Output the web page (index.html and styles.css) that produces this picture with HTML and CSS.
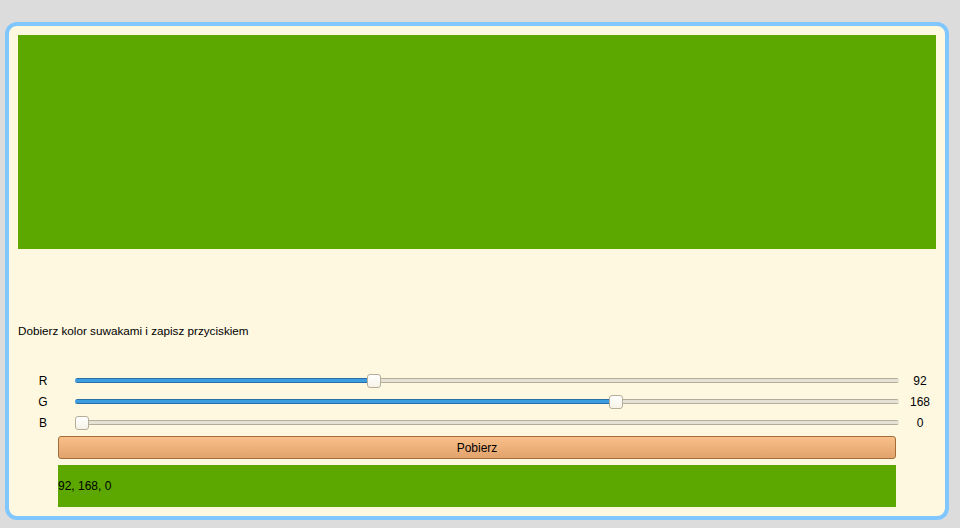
FILE: index.html
```html
<!DOCTYPE html>
<html lang="pl">
<head>
<meta charset="utf-8">
<title>Dobierz kolor</title>
<link rel="stylesheet" href="styles.css">
</head>
<body>
<div class="frame">
  <div class="swatch" style="background: rgb(92,168,0)"></div>
  <p class="hint">Dobierz kolor suwakami i zapisz przyciskiem</p>
  <div class="sliders">
    <span class="label">R</span>
    <input class="range" type="range" min="0" max="255" value="92" style="--v:0.3608">
    <span class="value">92</span>
    <span class="label">G</span>
    <input class="range" type="range" min="0" max="255" value="168" style="--v:0.6588">
    <span class="value">168</span>
    <span class="label">B</span>
    <input class="range" type="range" min="0" max="255" value="0" style="--v:0">
    <span class="value">0</span>
  </div>
  <button class="save" type="button">Pobierz</button>
  <div class="result" style="background: rgb(92,168,0)">92, 168, 0</div>
</div>
</body>
</html>
```
FILE: styles.css
```css
html, body {
  margin: 0;
  padding: 0;
}
body {
  background: #dcdcdc;
  font-family: "Liberation Sans", Arial, sans-serif;
  font-size: 12px;
  color: #000;
}
.frame {
  box-sizing: border-box;
  width: 944px;
  height: 498px;
  margin: 22px 0 0 5px;
  border: 4px solid #80c6ff;
  border-radius: 12px;
  background: #fff8e0;
  padding: 9px;
  display: flex;
  flex-direction: column;
}
.swatch {
  height: 214px;
  flex: none;
}
.hint {
  margin: 74px 0 0;
  padding-top: 1px;
  height: 13px;
  font-size: 11.7px;
  line-height: 14px;
}
.sliders {
  margin-top: 33px;
  display: grid;
  grid-template-columns: 50px 1fr 32px;
  grid-auto-rows: 21px;
  align-items: center;
}
.label, .value {
  text-align: center;
  line-height: 14px;
}
.range {
  -webkit-appearance: none;
  appearance: none;
  margin: 0 5px 0 7px;
  height: 14px;
  background: transparent;
  display: block;
  width: calc(100% - 12px);
}
.range::-webkit-slider-runnable-track {
  height: 5px;
  border-radius: 3px;
  background:
    linear-gradient(to bottom, #2a6fa6 0 1px, #3c9de0 1px 4px, #2a6fa6 4px) no-repeat 0 0 / calc(7px + (100% - 14px) * var(--v)) 100%,
    linear-gradient(to bottom, #b3ad9b 0 1px, #e6e2d3 1px 4px, #b3ad9b 4px);
}
.range::-webkit-slider-thumb {
  -webkit-appearance: none;
  appearance: none;
  box-sizing: border-box;
  width: 14px;
  height: 14px;
  margin-top: -4.5px;
  border: 1px solid #b6ae9a;
  border-radius: 3px;
  background: linear-gradient(#ffffff, #f6f2e6);
}
.save {
  margin: 3px 40px 0;
  height: 23px;
  box-sizing: border-box;
  border: 1px solid #a46c38;
  border-radius: 3px;
  background: linear-gradient(#f9c08a, #e2a26c);
  font-family: "Liberation Sans", Arial, sans-serif;
  font-size: 12px;
  color: #000;
  padding: 0;
}
.result {
  margin: 6px 40px 0;
  height: 42px;
  display: flex;
  align-items: center;
  line-height: 14px;
}
```
